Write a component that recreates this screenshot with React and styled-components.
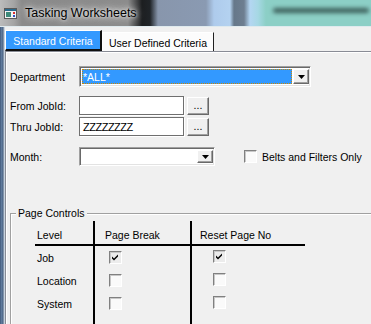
import React from 'react'
import styled, { createGlobalStyle } from 'styled-components'

const GlobalStyle = createGlobalStyle`
  html, body {
    margin: 0;
    padding: 0;
    background: #f0f0f0;
    overflow: hidden;
  }
  body {
    font-family: "Liberation Sans", Arial, sans-serif;
    font-size: 10.5px;
    color: #000;
  }
`

const Window = styled.div`
  width: 371px;
  height: 324px;
  display: flex;
  flex-direction: column;
  overflow: hidden;
  background: #f0f0f0;
`

const TitleBar = styled.div`
  height: 26px;
  flex: none;
  display: flex;
  align-items: center;
  padding-left: 4px;
  border-bottom: 1px solid #dfeaee;
  background: linear-gradient(90deg,
    #bcbcbc 0px, #a4a4a4 14px, #8a8a8a 22px, #8c8c8c 128px,
    #1c1e20 142px, #202428 150px, #8896ac 158px, #8a9ab2 206px,
    #aecbec 214px, #b4d2f0 230px, #66788a 234px, #6e7e90 244px,
    #b4d6f2 250px, #a6d8e4 258px, #8ccfc6 266px, #8ccfc6 100%);
`

const TitleText = styled.span`
  margin-left: 8px;
  font-size: 12.5px;
  color: #000;
  text-shadow: 0 0 6px #e4e4e4, 0 0 10px #d8d8d8, 0 0 3px #e8e8e8;
`

const DesktopBlur = styled.div`
  margin-left: auto;
  margin-right: 2px;
  width: 96px;
  height: 5px;
  margin-top: -6px;
  border-radius: 3px;
  background: #3c5e5a;
  filter: blur(2px);
`

const Body = styled.div`
  flex: 1;
  display: flex;
  min-height: 0;
`

const Frame = styled.div`
  width: 5px;
  flex: none;
  background: linear-gradient(90deg, #41597a 0px, #6884a6 2px, #3e5676 3px, #c9d3de 4px);
`

const Main = styled.div`
  flex: 1;
  display: flex;
  flex-direction: column;
  padding-top: 3px;
  min-width: 0;
`

const TabBar = styled.div`
  display: flex;
  align-items: flex-end;
  height: 21px;
  flex: none;
`

const Tab = styled.div`
  box-sizing: border-box;
  display: flex;
  align-items: center;
  justify-content: center;
  height: ${p => (p.$active ? 21 : 19)}px;
  width: ${p => p.$width}px;
  background: ${p => (p.$active ? '#3399ff' : '#fcfcfc')};
  color: ${p => (p.$active ? '#fff' : '#000')};
  border-top: 1px solid #fff;
  border-left: 1px solid #fff;
  border-right: ${p => (p.$active ? '2px solid #101010' : '1px solid #202020')};
  border-bottom: ${p => (p.$active ? '2px solid #101010' : 'none')};
  padding-top: ${p => (p.$active ? 1 : 2)}px;
`

const Panel = styled.div`
  flex: 1;
  border-top: 1px solid #898c95;
  border-left: 1px solid #898c95;
  box-shadow: inset 1px 1px 0 #fff;
  padding: 0 0 0 4px;
  overflow: hidden;
`

const Row = styled.div`
  display: flex;
  align-items: center;
  margin-top: ${p => p.$gap}px;
`

const Label = styled.div`
  width: 69px;
  flex: none;
`

const Combo = styled.div`
  box-sizing: border-box;
  width: ${p => p.$width}px;
  height: ${p => p.$height}px;
  display: flex;
  padding: 1px;
  border: 1px solid #a0a0a0;
  border-right-color: #fff;
  border-bottom-color: #fff;
  background: #fff;
  box-shadow: inset 1px 1px 0 #696969, inset -1px -1px 0 #e3e3e3;
`

const ComboField = styled.div`
  flex: 1;
  margin: 1px;
  display: flex;
  align-items: center;
  padding-left: 1px;
  background: ${p => (p.$selected ? '#3399ff' : '#fff')};
  color: #fff;
  outline: ${p => (p.$selected ? '1px dotted #cc8800' : 'none')};
  outline-offset: -1px;
`

const DropButton = styled.div`
  box-sizing: border-box;
  width: 16px;
  margin: 1px 0;
  display: flex;
  align-items: center;
  justify-content: center;
  background: #f0f0f0;
  border: 1px solid #fff;
  border-right-color: #696969;
  border-bottom-color: #696969;
  box-shadow: inset -1px -1px 0 #a0a0a0;
`

const TextBox = styled.div`
  box-sizing: border-box;
  width: 105px;
  height: 19px;
  display: flex;
  align-items: center;
  padding: 1px 0 0 3px;
  background: #fff;
  border: 1px solid #6f6f6f;
  box-shadow: 1px 1px 0 #fff;
`

const Hatch = styled.span`
  font-size: 11px;
  letter-spacing: -0.5px;
  line-height: 1;
`

const DotsButton = styled.div`
  box-sizing: border-box;
  width: 22px;
  height: 18px;
  margin-left: 3px;
  display: flex;
  align-items: flex-end;
  justify-content: center;
  padding-bottom: 3px;
  background: #f0f0f0;
  border: 1px solid #fff;
  border-right-color: #696969;
  border-bottom-color: #696969;
  box-shadow: inset -1px -1px 0 #a0a0a0;
  line-height: 1;
`

const Check = styled.div`
  box-sizing: border-box;
  width: 13px;
  height: 13px;
  flex: none;
  display: flex;
  align-items: center;
  justify-content: center;
  background: ${p => (p.$checked ? '#ececec' : '#fafafa')};
  border: 1px solid #808080;
  border-right-color: #fff;
  border-bottom-color: #fff;
  box-shadow: inset 1px 1px 0 #c8c8c8;
  margin-top: ${p => p.$nudge || 0}px;
`

const CheckOption = styled.label`
  display: flex;
  align-items: center;
  gap: 5px;
  margin-left: 29px;
`

const GroupBox = styled.fieldset`
  margin: 41px 0 0 0;
  padding: 0;
  border: none;
  border-top: 1px solid #a0a0a0;
  border-left: 1px solid #a0a0a0;
  box-shadow: inset 1px 1px 0 #fff;
  height: 200px;
`

const Legend = styled.legend`
  margin-left: 5px;
  padding: 0 2px;
  background: #f0f0f0;
`

const LevelGrid = styled.div`
  display: grid;
  grid-template-columns: 60px 97px 113px;
  grid-template-rows: 25px;
  grid-auto-rows: 23px;
  margin: 2px 0 0 24px;
`

const HeadCell = styled.div`
  box-sizing: border-box;
  display: flex;
  align-items: center;
  padding: 5px 0 0 ${p => p.$pad}px;
  border-bottom: 2px solid #000;
  border-right: ${p => (p.$line ? '2px solid #000' : 'none')};
`

const Cell = styled.div`
  display: flex;
  align-items: center;
  padding-left: ${p => p.$pad}px;
  border-right: ${p => (p.$line ? '2px solid #000' : 'none')};
`

function WinIcon() {
  return (
    <svg width="13" height="13" viewBox="0 0 13 13">
      <rect x="0.5" y="1.5" width="12" height="10" fill="#f4f4f4" stroke="#5a5a5a" />
      <rect x="1" y="2" width="11" height="2" fill="#2c6a8c" />
      <rect x="2" y="5" width="5" height="5" fill="#3d8a7a" />
      <rect x="9" y="5" width="2" height="2" fill="#d83030" />
      <rect x="9" y="8" width="2" height="2" fill="#3050c0" />
    </svg>
  )
}

function Arrow() {
  return (
    <svg width="7" height="4" viewBox="0 0 7 4">
      <path d="M0 0h7L3.5 4z" fill="#000" />
    </svg>
  )
}

function CheckBox({ checked, nudge }) {
  return (
    <Check $checked={checked} $nudge={nudge}>
      {checked && (
        <svg width="9" height="9" viewBox="0 0 9 9">
          <path d="M1 3.5l2 2 4-4v2l-4 4-2-2z" fill="#000" />
        </svg>
      )}
    </Check>
  )
}

const levels = [
  { name: 'Job', pageBreak: true, reset: true },
  { name: 'Location', pageBreak: false, reset: false },
  { name: 'System', pageBreak: false, reset: false },
]

export default function App() {
  return (
    <>
      <GlobalStyle />
      <Window>
        <TitleBar>
          <WinIcon />
          <TitleText>Tasking Worksheets</TitleText>
          <DesktopBlur />
        </TitleBar>
        <Body>
          <Frame />
          <Main>
            <TabBar>
              <Tab $active $width={97}>Standard Criteria</Tab>
              <Tab $width={112}>User Defined Criteria</Tab>
            </TabBar>
            <Panel>
              <Row $gap={14}>
                <Label>Department</Label>
                <Combo $width={232} $height={21}>
                  <ComboField $selected>*ALL*</ComboField>
                  <DropButton><Arrow /></DropButton>
                </Combo>
              </Row>
              <Row $gap={9}>
                <Label>From JobId:</Label>
                <TextBox />
                <DotsButton>...</DotsButton>
              </Row>
              <Row $gap={2}>
                <Label>Thru JobId:</Label>
                <TextBox><Hatch>ZZZZZZZZ</Hatch></TextBox>
                <DotsButton>...</DotsButton>
              </Row>
              <Row $gap={11}>
                <Label>Month:</Label>
                <Combo $width={136} $height={19}>
                  <ComboField />
                  <DropButton><Arrow /></DropButton>
                </Combo>
                <CheckOption>
                  <CheckBox />
                  Belts and Filters Only
                </CheckOption>
              </Row>
              <GroupBox>
                <Legend>Page Controls</Legend>
                <LevelGrid>
                  <HeadCell $pad={2} $line>Level</HeadCell>
                  <HeadCell $pad={10} $line>Page Break</HeadCell>
                  <HeadCell $pad={8}>Reset Page No</HeadCell>
                  {levels.map(l => (
                    <React.Fragment key={l.name}>
                      <Cell $pad={2} $line>{l.name}</Cell>
                      <Cell $pad={14} $line><CheckBox checked={l.pageBreak} /></Cell>
                      <Cell $pad={21}><CheckBox checked={l.reset} nudge={-2} /></Cell>
                    </React.Fragment>
                  ))}
                  <Cell $line />
                  <Cell $line />
                  <Cell />
                </LevelGrid>
              </GroupBox>
            </Panel>
          </Main>
        </Body>
      </Window>
    </>
  )
}
